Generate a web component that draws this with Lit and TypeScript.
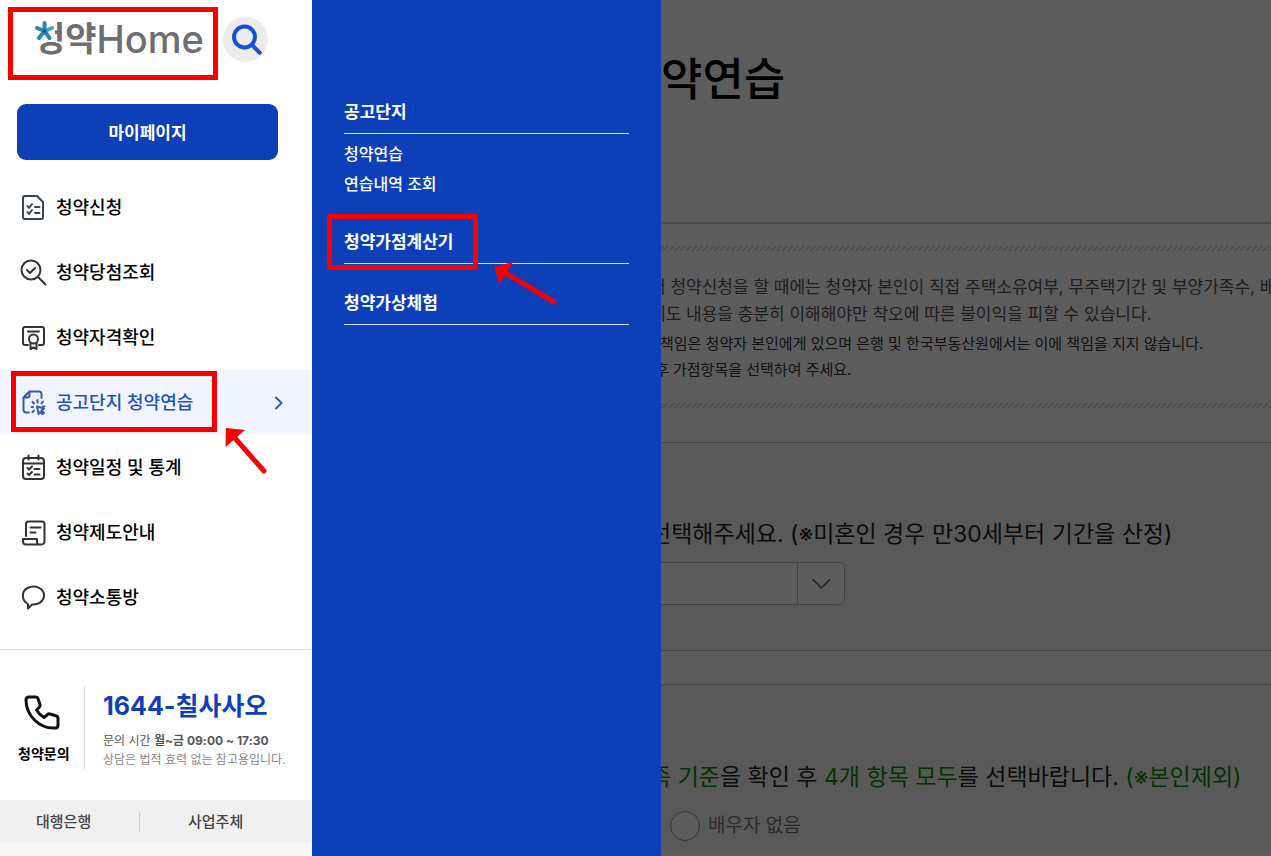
import { LitElement, html, svg, css } from "lit";
import { customElement, state } from "lit/decorators.js";

const icons: Record<string, unknown> = {
  form: svg`<g stroke="#3b4256"><path d="M5 2h12l6 6v15a2 2 0 0 1-2 2H5a2 2 0 0 1-2-2V4a2 2 0 0 1 2-2z"/><path d="M7.500 12l1.500 2 3-4M7.500 18l1.500 2 3-4M15 13h4.500M15 19h4.500"/></g>`,
  search: svg`<circle cx="11" cy="11" r="9.500"/><path d="M7 11l3 3 5-5M18 18l7.500 7.500"/>`,
  badge: svg`<path d="M8 21H5a2 2 0 0 1-2-2V5a2 2 0 0 1 2-2h17a2 2 0 0 1 2 2v14a2 2 0 0 1-2 2h-3M8 7.500h11"/><circle cx="13.500" cy="15" r="4.500"/><path d="M10.500 19v6l3-1.500 3 1.500v-6"/>`,
  practice: svg`<path d="M9 23.500H6a2.500 2.500 0 0 1-2.500-2.500V8.500L9.500 2.500H19A2.500 2.500 0 0 1 21.500 5v4M9.500 2.500V6a2.500 2.500 0 0 1-2.500 2.500H3.500M17.500 11v2.500M13 18h-1.500M23 12.500l-1.500 2M12.500 13l1.500 1.500M14 21.500l-1.500 1.500M24.500 17.500H23"/><path d="M17 17.500l7 2-2.500 2 2.500 2.500-1.500 1-2.500-2-1.500 2z"/>`,
  calendar: svg`<rect x="3" y="4" width="21" height="21" rx="3"/><path d="M3 9.500h21M8.500 1.500v4M18.500 1.500v4M7.500 14l1.500 1.500 3-3M7.500 19.500l1.500 1.500 3-3M14.500 15h5M14.500 20.500h5"/>`,
  scroll: svg`<path d="M6 17V5a2.500 2.500 0 0 1 2.500-2.500H22A2.500 2.500 0 0 1 24.500 5v17a3 3 0 0 1-3 3.500H6a3 3 0 0 1-3-3V20h14v3a2.500 2.500 0 0 0 3 2.500M10.500 8.500h10M10.500 13.500h5"/>`,
  chat: svg`<path d="M8 24.500v-4.500C1 16 1.500 7 7.500 4c8-4 17 1 16.500 8-.500 6-6 9-12 8.500L8 24.500z"/>`,
};

interface Item { icon: string; label: string }

const menu: Item[] = [
  { icon: "form", label: "청약신청" },
  { icon: "search", label: "청약당첨조회" },
  { icon: "badge", label: "청약자격확인" },
  { icon: "practice", label: "공고단지 청약연습" },
  { icon: "calendar", label: "청약일정 및 통계" },
  { icon: "scroll", label: "청약제도안내" },
  { icon: "chat", label: "청약소통방" },
];

@customElement("app-root")
export class AppRoot extends LitElement {
  @state() private active = 3;

  static styles = css`
    :host {
      display: block;
      position: relative;
      min-height: 100vh;
      overflow: hidden;
      background: #fff;
      font-family: Inter, "Noto Sans CJK KR", sans-serif;
      color: #000;
    }
    *, *::before, *::after { box-sizing: border-box; }
    h1, h2, h3, p, ul { margin: 0; padding: 0; font-weight: inherit; }
    ul { list-style: none; }
    a { color: inherit; text-decoration: none; }
    button { font: inherit; border: 0; cursor: pointer; }
    svg { display: block; fill: none; }

    /* page beneath the drawer */
    .page { padding-left: 650px; white-space: nowrap; }
    .title {
      padding: 46px 0 0 11px;
      height: 224px;
      font-size: 45px;
      line-height: 68px;
      font-weight: 500;
      border-bottom: 2px solid #c9d0e8;
    }
    .notice { margin-top: 22px; margin-bottom: 34px; color: #555; font-size: 17px; line-height: 27px; }
    .hatch {
      height: 5px;
      background: repeating-linear-gradient(135deg, #dadada 0 2px, transparent 2px 4px);
    }
    .notice-text { padding: 23px 0 20px; }
    .small { color: #333; font-size: 15px; line-height: 26px; padding: 3px 0 0 5px; }
    .small p:first-child { padding-left: 5px; }
    .panel {
      background: #f7f7f7;
      border: solid #c4c4c4;
      border-width: 1px 0;
      margin-bottom: 33px;
      padding-top: 72px;
      padding-bottom: 45px;
    }
    .panel:last-child { margin-bottom: 0; padding-top: 73px; padding-bottom: 10px; border-bottom: 0; }
    .question { font-size: 23px; line-height: 38px; color: #222; }
    .green { color: #0a8f0a; }
    .choice {
      display: grid;
      grid-template-columns: 147px 48px;
      width: 195px;
      margin-top: 9px;
    }
    .choice select {
      grid-area: 1 / 1 / 2 / 3;
      appearance: none;
      height: 43px;
      border: 1px solid #bbb;
      border-radius: 6px;
      background: #fff;
      font: inherit;
    }
    .choice svg {
      grid-area: 1 / 2;
      width: 48px;
      height: 43px;
      border-left: 1px solid #bbb;
      pointer-events: none;
      stroke: #777;
      stroke-width: 2;
    }
    .radio {
      display: flex;
      align-items: center;
      gap: 8px;
      padding-left: 20px;
      margin-top: 15px;
      font-size: 19px;
      line-height: 30px;
      color: #777;
    }
    .radio input {
      appearance: none;
      width: 30px;
      height: 30px;
      margin: 0;
      border: 1px solid #999;
      border-radius: 50%;
      background: #fff;
    }
    .dim { position: absolute; inset: 0; background: rgba(0, 0, 0, 0.64); }

    /* drawer */
    .drawer { position: absolute; top: 0; bottom: 0; left: 0; display: flex; }
    .side { width: 312px; background: #fff; display: flex; flex-direction: column; }
    .top { display: flex; align-items: center; height: 78px; padding-left: 34px; gap: 20px; }
    .logo { position: relative; display: flex; align-items: center; width: 169px; color: #6d6e71; line-height: 44px; white-space: nowrap; }
    .logo svg { position: absolute; left: 0; top: 3px; }
    .logo-ko { font-size: 34px; font-weight: 700; flex: none; }
    .logo-en { font-size: 38px; font-weight: 500; flex: none; }
    .find {
      width: 45px; height: 45px; padding: 0;
      border-radius: 50%; background: #ececec;
      display: grid; place-items: center;
      stroke: #1550dc; stroke-width: 4;
    }
    .my {
      margin: 26px 34px 15px 17px;
      height: 56px;
      border-radius: 9px;
      padding: 0 0 2px;
      background: #0d3fb9;
      color: #fff;
      font-size: 17px;
      font-weight: 600;
    }
    .menu a {
      display: flex;
      align-items: center;
      gap: 9px;
      height: 65px;
      padding: 0 28px 0 20px;
      font-size: 18px;
      font-weight: 500;
      stroke: #333;
      stroke-width: 2;
      stroke-linecap: round;
      stroke-linejoin: round;
    }
    .menu span { flex: 1; stroke: none; padding-bottom: 4px; }
    .menu .on { background: #f0f5ff; color: #1b50d0; stroke: #3458b4; }
    .contact {
      display: flex;
      margin-top: 19px;
      height: 151px;
      border-top: 1px solid #d9dadb;
      padding: 36px 0 31px 17px;
    }
    .call {
      width: 68px;
      border-right: 1px solid #ddd;
      padding: 9px 0 0 1px;
      font-size: 14px;
      font-weight: 600;
      line-height: 20px;
    }
    .call svg { margin: 0 0 13px 6px; }
    .info { padding-left: 18px; font-size: 12px; line-height: 19px; color: #888; white-space: nowrap; }
    .number { font-size: 25px; font-weight: 700; line-height: 40px; color: #0d3fb9; margin-bottom: 5px; }
    .hours { color: #555; }
    .links {
      display: grid;
      grid-template-columns: 140px 1fr;
      height: 43px;
      align-items: center;
      background: #f0f0f0;
      color: #444;
      font-size: 15px;
      font-weight: 500;
      line-height: 20px;
    }
    .links a:first-child { padding-left: 36px; border-right: 1px solid #ccc; }
    .links a:last-child { padding-left: 48px; }
    .rest { flex: 1; background: #f7f7f7; }
    .sub {
      width: 349px;
      padding: 92px 32px 0;
      background: #0d3fb9;
      color: #fff;
      font-size: 16px;
      font-weight: 500;
    }
    .sub h3 {
      height: 42px;
      margin-bottom: 19px;
      border-bottom: 1px solid #d5def5;
      font-size: 17px;
      font-weight: 600;
      line-height: 40px;
    }
    .sub ul { margin: -14px 0 23px; line-height: 30px; }

    /* callouts drawn over the page */
    .mark { position: absolute; border: 5px solid #f90000; pointer-events: none; }
    .m1 { left: 8px; top: 7px; width: 210px; height: 73px; }
    .m2 { left: 11px; top: 371px; width: 206px; height: 61px; }
    .m3 { left: 327px; top: 214px; width: 151px; height: 56px; }
    .arrow { position: absolute; stroke: #f90000; fill: #f90000; stroke-linecap: round; pointer-events: none; }
    .a1 { left: 220px; top: 425px; }
    .a2 { left: 490px; top: 258px; }
  `;

  render() {
    return html`
      <main class="page">
        <h1 class="title">약연습</h1>
        <section class="notice">
          <div class="hatch"></div>
          <div class="notice-text">
            <p>서 청약신청을 할 때에는 청약자 본인이 직접 주택소유여부, 무주택기간 및 부양가족수, 배우</p>
            <p>제도 내용을 충분히 이해해야만 착오에 따른 불이익을 피할 수 있습니다.</p>
            <div class="small">
              <p>책임은 청약자 본인에게 있으며 은행 및 한국부동산원에서는 이에 책임을 지지 않습니다.</p>
              <p>후 가점항목을 선택하여 주세요.</p>
            </div>
          </div>
          <div class="hatch"></div>
        </section>
        <section class="panel">
          <label class="question" for="period">선택해주세요. (※미혼인 경우 만30세부터 기간을 산정)</label>
          <div class="choice">
            <select id="period"><option></option></select>
            <svg viewBox="0 0 48 43"><path d="M15 17l9 9 9-9" /></svg>
          </div>
        </section>
        <section class="panel">
          <p class="question"><span class="green">족 기준</span>을 확인 후 <span class="green">4개 항목 모두</span>를 선택바랍니다. <span class="green">(※본인제외)</span></p>
          <label class="radio"><input type="radio" name="spouse" />배우자 없음</label>
        </section>
      </main>
      <div class="dim"></div>
      <div class="drawer">
        <aside class="side">
          <header class="top">
            <a class="logo" href="#">
              <span class="logo-ko">청약</span><span class="logo-en">Home</span>
              <svg width="22" height="22" viewBox="0 0 22 22">
                <path fill="#fff" d="M0 0h21v22H0z" />
                <g stroke-width="4" stroke-linecap="round">
                  <path stroke="#2f83ab" d="M10.500 11V3M10.500 11L3 8M10.500 11L5 18M10.500 11l5 7" />
                  <path stroke="#2fa6d6" d="M10.500 11L18 8" />
                  <path stroke="#1d5b86" d="M10.500 11v.100" />
                </g>
              </svg>
            </a>
            <button class="find" aria-label="검색">
              <svg width="32" height="32" viewBox="0 0 32 32"><circle cx="14.500" cy="14" r="10.500" /><path d="M22 22l9 9" /></svg>
            </button>
          </header>
          <button class="my">마이페이지</button>
          <nav class="menu">
            ${menu.map((m, i) => html`
              <a href="#" class=${i === this.active ? "on" : ""} @click=${() => (this.active = i)}>
                <svg width="27" height="27" viewBox="0 0 27 27">${icons[m.icon]}</svg>
                <span>${m.label}</span>
                ${i === this.active ? html`<svg width="10" height="14" viewBox="0 0 10 14"><path d="M2 1.500L7.500 7 2 12.500" /></svg>` : ""}
              </a>`)}
          </nav>
          <section class="contact">
            <div class="call">
              <svg width="36" height="36" viewBox="0 0 36 36" stroke="#111" stroke-width="3" stroke-linejoin="round">
                <path d="M5 2h7q1.500 0 2 1.500l2 6q.500 1.500-.500 2.500l-3 3q3 5 7.500 7.500l3.500-3q1-1 2.500-.500l6.500 2q1.500.500 1.500 2v7q0 3-3 3C15 34 2 20 2 5q0-3 3-3z" />
              </svg>
              청약문의
            </div>
            <div class="info">
              <p class="number">1644-칠사사오</p>
              <p class="hours">문의 시간 <b>월~금 09:00 ~ 17:30</b></p>
              <p>상담은 법적 효력 없는 참고용입니다.</p>
            </div>
          </section>
          <footer class="links"><a href="#">대행은행</a><a href="#">사업주체</a></footer>
          <div class="rest"></div>
        </aside>
        <nav class="sub">
          <h3><a href="#">공고단지</a></h3>
          <ul>
            <li><a href="#">청약연습</a></li>
            <li><a href="#">연습내역 조회</a></li>
          </ul>
          <h3><a href="#">청약가점계산기</a></h3>
          <h3><a href="#">청약가상체험</a></h3>
        </nav>
      </div>
      <div class="mark m1"></div>
      <div class="mark m2"></div>
      <div class="mark m3"></div>
      <svg class="arrow a1" width="50" height="50" viewBox="0 0 50 50"><path stroke-width="5" d="M44 46L14 12" /><path stroke="none" d="M6 3l19 2L5.500 22z" /></svg>
      <svg class="arrow a2" width="70" height="50" viewBox="0 0 70 50"><path stroke-width="5" d="M64 44L14 14" /><path stroke="none" d="M4 9l19-5L9.500 26z" /></svg>
    `;
  }
}
